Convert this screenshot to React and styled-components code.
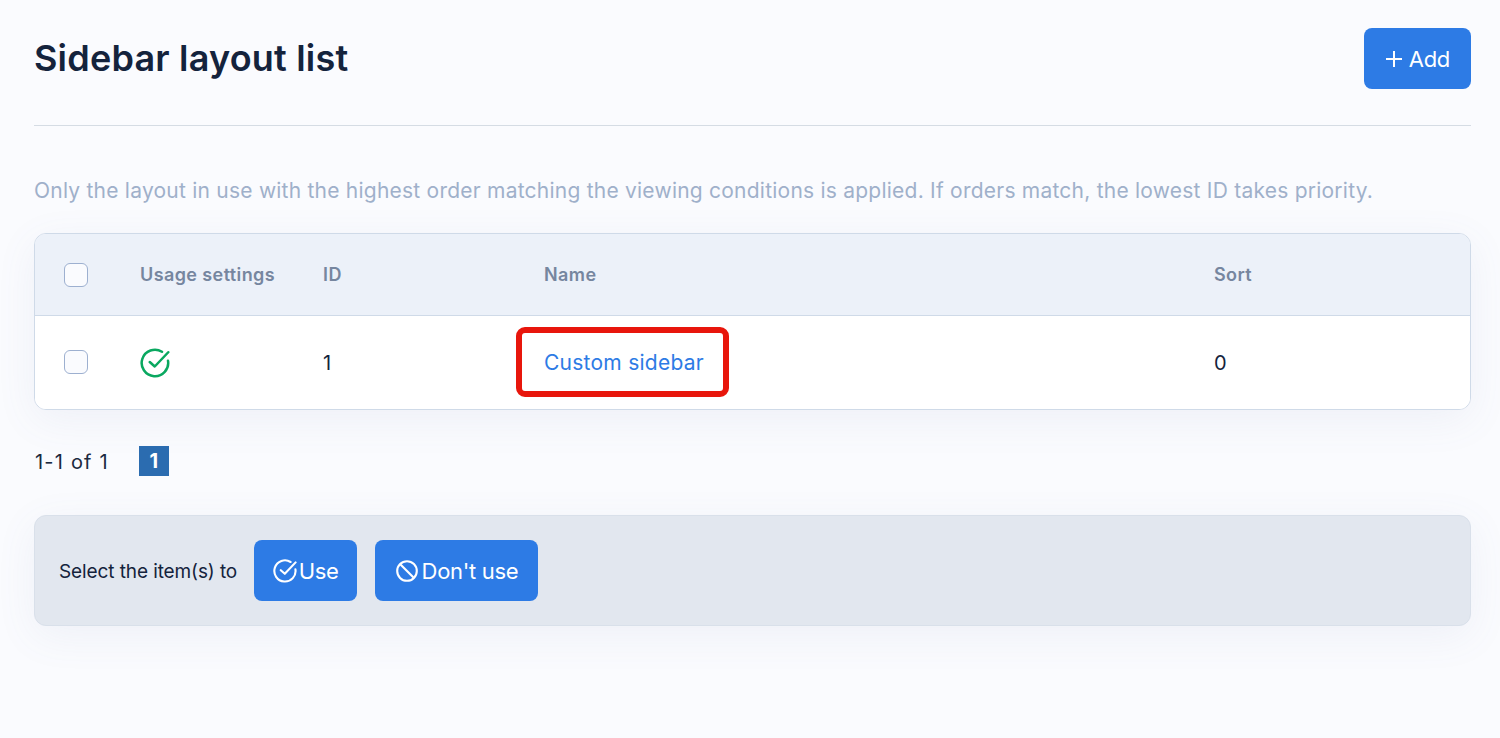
import styled, { createGlobalStyle } from "styled-components";

const EstiloGlobal = createGlobalStyle`
    html, body {
        margin: 0;
        background-color: #fafbfe;
        font-family: "Inter", "Liberation Sans", sans-serif;
    }
    * { box-sizing: border-box; }
`

const Pagina = styled.main`
    padding: 28px 29px 0 34px;
    height: 738px;
    overflow: hidden;
`

const Topo = styled.header`
    display: flex;
    align-items: flex-start;
    justify-content: space-between;
    padding-bottom: 36px;
    border-bottom: 1px solid #d5dce4;
`

const Titulo = styled.h1`
    margin: 0;
    font-size: 36px;
    line-height: 60px;
    font-weight: 600;
    color: #14233c;
    letter-spacing: 0.2px;
`

const Botao = styled.button`
    height: 61px;
    padding: 0 ${props => props.$lado || 19}px;
    display: flex;
    align-items: center;
    gap: ${props => props.$gap || 4}px;
    background-color: #2d7be5;
    color: #ffffff;
    border: 0;
    border-radius: 8px;
    font-family: inherit;
    font-size: 22px;
    font-weight: 400;
    letter-spacing: -0.3px;
`

const Descricao = styled.p`
    margin: 51px 0 28px;
    font-size: 21px;
    line-height: 28px;
    color: #9fb0ca;
    letter-spacing: 0.23px;
    white-space: nowrap;
`

const Tabela = styled.section`
    background-color: #ffffff;
    border: 1px solid #cfdae8;
    border-radius: 12px;
    overflow: hidden;
    box-shadow: 0 10px 40px rgba(100, 120, 160, 0.08);
`

const Linha = styled.div`
    display: grid;
    grid-template-columns: 76px 183px 221px 670px 1fr;
    align-items: center;
    height: ${props => props.$cabecalho ? 82 : 93}px;
    padding-left: 29px;
    background-color: ${props => props.$cabecalho ? "#ecf1f9" : "#ffffff"};
    border-bottom: ${props => props.$cabecalho ? "1px solid #cfdae8" : "0"};
    font-size: ${props => props.$cabecalho ? 18 : 20}px;
    font-weight: ${props => props.$cabecalho ? 600 : 400};
    letter-spacing: ${props => props.$cabecalho ? 0.4 : 0}px;
    color: ${props => props.$cabecalho ? "#76869f" : "#14233c"};
`

const Caixa = styled.span`
    display: block;
    width: 24px;
    height: 24px;
    margin-top: ${props => props.$acima ? -2 : 0}px;
    background-color: #fafbfe;
    border: 1px solid #9db0d0;
    border-radius: 6px;
`

const CelulaIcone = styled.span`
    display: flex;
    align-items: center;
`

const LinkNome = styled.a`
    position: relative;
    display: inline-block;
    color: #2d7be5;
    text-decoration: none;
    font-size: 21px;
    letter-spacing: 0.25px;

    &::after {
        content: "";
        position: absolute;
        left: -28px;
        right: -25px;
        top: -23px;
        bottom: -22px;
        border: 6px solid #e8160c;
        border-radius: 9px;
    }
`

const Paginacao = styled.nav`
    display: flex;
    align-items: center;
    gap: 30px;
    margin: 36px 0 39px;
    padding-left: 1px;
    font-size: 20px;
    height: 30px;
    letter-spacing: 1.2px;
    color: #1c2a3f;
`

const ResumoPaginas = styled.span`
    margin-top: 2px;
`

const PaginaAtual = styled.span`
    width: 30px;
    height: 30px;
    display: flex;
    align-items: center;
    justify-content: center;
    background-color: #2b6cb0;
    color: #ffffff;
    font-size: 20px;
    font-weight: 700;
    letter-spacing: 0;
`

const BarraAcoes = styled.section`
    display: flex;
    align-items: center;
    height: 111px;
    padding-left: 24px;
    background-color: #e2e7ef;
    border: 1px solid #d9e0ea;
    border-radius: 12px;
    box-shadow: 0 10px 40px rgba(100, 120, 160, 0.08);
    font-size: 19px;
    letter-spacing: -0.1px;
    color: #14233c;
`

const TextoAcoes = styled.span`
    margin: 2px 17px 0 0;
`

const Separador = styled.span`
    width: 18px;
`

const IconeUso = ({ tamanho, cor, traco }) => (
    <svg width={tamanho} height={tamanho} viewBox="0 0 24 24" fill="none" stroke={cor} strokeWidth={traco} strokeLinecap="round" strokeLinejoin="round">
        <path d="M22.4 10.2A10.6 10.6 0 1 1 17.6 3" />
        <path d="M7.8 11.2l4 3.6L22.6 3.4" />
    </svg>
)

const IconeProibido = () => (
    <svg width="24" height="24" viewBox="0 0 24 24" fill="none" stroke="#ffffff" strokeWidth="2.1">
        <circle cx="12" cy="12" r="9.8" />
        <path d="M5 5l14 14" />
    </svg>
)

const IconeMais = () => (
    <svg width="18" height="18" viewBox="0 0 18 18" fill="none" stroke="#ffffff" strokeWidth="2">
        <path d="M9 1v16M1 9h16" />
    </svg>
)

const App = () => {
    return (
        <>
            <EstiloGlobal />
            <Pagina>
                <Topo>
                    <Titulo>Sidebar layout list</Titulo>
                    <Botao $lado={21} $gap={6}><IconeMais />Add</Botao>
                </Topo>
                <Descricao>Only the layout in use with the highest order matching the viewing conditions is applied. If orders match, the lowest ID takes priority.</Descricao>
                <Tabela>
                    <Linha $cabecalho>
                        <Caixa />
                        <span>Usage settings</span>
                        <span>ID</span>
                        <span>Name</span>
                        <span>Sort</span>
                    </Linha>
                    <Linha>
                        <Caixa $acima />
                        <CelulaIcone><IconeUso tamanho={30} cor="#0aa860" traco={2} /></CelulaIcone>
                        <span>1</span>
                        <span><LinkNome href="#">Custom sidebar</LinkNome></span>
                        <span>0</span>
                    </Linha>
                </Tabela>
                <Paginacao>
                    <ResumoPaginas>1-1 of 1</ResumoPaginas>
                    <PaginaAtual>1</PaginaAtual>
                </Paginacao>
                <BarraAcoes>
                    <TextoAcoes>Select the item(s) to</TextoAcoes>
                    <Botao $lado={18.5} $gap={2}><IconeUso tamanho={24} cor="#ffffff" traco={2.1} />Use</Botao>
                    <Separador />
                    <Botao $lado={19.5} $gap={3}><IconeProibido />Don't use</Botao>
                </BarraAcoes>
            </Pagina>
        </>
    )
}

export default App;
